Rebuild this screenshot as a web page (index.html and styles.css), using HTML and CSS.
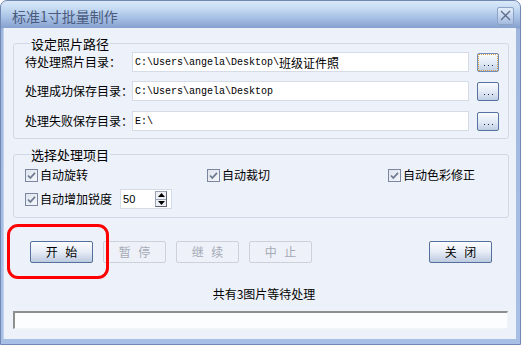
FILE: index.html
```html
<!DOCTYPE html>
<html lang="zh">
<head>
<meta charset="utf-8">
<title>标准1寸批量制作</title>
<link rel="stylesheet" href="styles.css">
</head>
<body>
<div class="window">
  <div class="titlebar">
    <span class="title">标准1寸批量制作</span>
    <span class="close-btn">
      <svg width="11" height="11" viewBox="0 0 11 11"><path d="M1 1 L10 10 M10 1 L1 10" stroke="#5d6b87" stroke-width="1.3" fill="none"/></svg>
    </span>
  </div>
  <div class="client">
    <fieldset class="group group-paths">
      <legend>设定照片路径</legend>
      <div class="path-row">
        <span class="label">待处理照片目录：</span>
        <div class="input"><span class="mono">C:\Users\angela\Desktop\</span><span class="cjk">班级证件照</span></div>
        <span class="browse focus"><i></i><i></i><i></i></span>
      </div>
      <div class="path-row">
        <span class="label">处理成功保存目录：</span>
        <div class="input"><span class="mono">C:\Users\angela\Desktop</span></div>
        <span class="browse"><i></i><i></i><i></i></span>
      </div>
      <div class="path-row">
        <span class="label">处理失败保存目录：</span>
        <div class="input"><span class="mono">E:\</span></div>
        <span class="browse"><i></i><i></i><i></i></span>
      </div>
    </fieldset>

    <fieldset class="group group-options">
      <legend>选择处理项目</legend>
      <div class="opt-row">
        <label class="check c1"><span class="box"><svg width="11" height="11" viewBox="0 0 11 11"><path d="M2 5.5 L4.3 8 L9 2.8" stroke="#6f7b92" stroke-width="1.8" fill="none"/></svg></span>自动旋转</label>
        <label class="check c2"><span class="box"><svg width="11" height="11" viewBox="0 0 11 11"><path d="M2 5.5 L4.3 8 L9 2.8" stroke="#6f7b92" stroke-width="1.8" fill="none"/></svg></span>自动裁切</label>
        <label class="check"><span class="box"><svg width="11" height="11" viewBox="0 0 11 11"><path d="M2 5.5 L4.3 8 L9 2.8" stroke="#6f7b92" stroke-width="1.8" fill="none"/></svg></span>自动色彩修正</label>
      </div>
      <div class="opt-row row2">
        <label class="check"><span class="box"><svg width="11" height="11" viewBox="0 0 11 11"><path d="M2 5.5 L4.3 8 L9 2.8" stroke="#6f7b92" stroke-width="1.8" fill="none"/></svg></span>自动增加锐度</label>
        <div class="spin">
          <span class="spin-val">50</span>
          <span class="spin-btns">
            <span class="spin-b"><svg width="7" height="4" viewBox="0 0 7 4"><path d="M0 4 L3.5 0 L7 4 Z" fill="#000"/></svg></span>
            <span class="spin-b"><svg width="7" height="4" viewBox="0 0 7 4"><path d="M0 0 L3.5 4 L7 0 Z" fill="#000"/></svg></span>
          </span>
        </div>
      </div>
    </fieldset>

    <div class="btn-row">
      <span class="btn">开 始</span>
      <span class="btn disabled">暂 停</span>
      <span class="btn disabled">继 续</span>
      <span class="btn disabled">中 止</span>
      <span class="spacer"></span>
      <span class="btn">关 闭</span>
      <span class="highlight"></span>
    </div>

    <div class="status">共有3图片等待处理</div>
    <div class="progress"></div>
  </div>
</div>
</body>
</html>
```
FILE: styles.css
```css
html, body {
  margin: 0;
  padding: 0;
  background: #ffffff;
}
body {
  font-family: "Noto Sans CJK SC", "Liberation Sans", sans-serif;
  font-size: 12px;
  color: #000;
}
.window {
  width: 521px;
  height: 345px;
  box-sizing: border-box;
  display: flex;
  flex-direction: column;
  border: 1px solid #7088b4;
  border-radius: 7px 7px 0 0;
  background: linear-gradient(to bottom, #dbe9f8 0px, #c4daf2 8px, #a9c2e6 16px, #86a1cf 27px, #9fb7df 28px, #a9c0e6 100%);
  overflow: hidden;
}
.titlebar {
  height: 27px;
  flex: none;
  display: flex;
  align-items: center;
  justify-content: space-between;
  padding: 0 6px 0 11px;
  box-sizing: border-box;
}
.title {
  font-size: 14px;
  color: #4a5b7d;
  line-height: 16px;
  margin-top: 2px;
}
.close-btn {
  width: 15px;
  height: 16px;
  border: 1px solid #8ea2c6;
  border-radius: 2px;
  background: linear-gradient(to bottom, rgba(255,255,255,0.45), rgba(255,255,255,0.15));
  display: flex;
  align-items: center;
  justify-content: center;
  margin-top: 2px;
}
.client {
  flex: 1;
  margin: 0 4px 5px 2px;
  background: #edf1f9;
  border-left: 1px solid #c3d2ec;
  display: flex;
  flex-direction: column;
  padding: 0 7px 0 9px;
  position: relative;
}
.group {
  margin: 0;
  border: 1px solid #d2d9e6;
  border-radius: 3px;
}
.group legend {
  font-size: 13px;
  line-height: 15px;
  padding: 0 1px;
  margin-left: 5px;
  color: #000;
}
.group-paths {
  margin-top: 8px;
  padding: 1px 8px 7px 11px;
  display: flex;
  flex-direction: column;
  gap: 9px;
}
.path-row {
  display: flex;
  align-items: center;
  height: 20px;
}
.path-row:nth-of-type(3) {
  margin-top: 1px;
}
.label {
  width: 107px;
  flex: none;
  white-space: nowrap;
  line-height: 20px;
}
.input {
  width: 337px;
  height: 20px;
  box-sizing: border-box;
  background: #fff;
  border: 1px solid #d5dce8;
  display: flex;
  align-items: center;
  padding-left: 2px;
  white-space: nowrap;
  overflow: hidden;
}
.mono {
  font-family: "Liberation Mono", "DejaVu Sans Mono", monospace;
  font-size: 10px;
  letter-spacing: 0;
}
.cjk {
  font-size: 12px;
}
.browse {
  margin-left: 8px;
  width: 22px;
  height: 19px;
  box-sizing: border-box;
  border: 1px solid #56729f;
  border-radius: 2px;
  background: linear-gradient(to bottom, #f9fbfe 0%, #e4ebf6 50%, #c1cfe5 100%);
  display: flex;
  align-items: flex-end;
  justify-content: center;
  gap: 3px;
  padding-bottom: 5px;
}
.browse.focus {
  outline: 1px dotted #d9a03a;
  outline-offset: -2px;
  border-color: #6f8cbf;
}
.browse i {
  width: 1px;
  height: 1px;
  background: #1c2a44;
}
.group-options {
  margin-top: 8px;
  padding: 5px 8px 8px 11px;
  display: flex;
  flex-direction: column;
  gap: 6px;
}
.opt-row {
  display: flex;
  align-items: center;
  height: 16px;
}
.opt-row.row2 {
  height: 20px;
}
.check {
  display: flex;
  align-items: center;
  white-space: nowrap;
  line-height: 16px;
}
.check.c1 { width: 182px; }
.check.c2 { width: 181px; }
.box {
  width: 13px;
  height: 13px;
  box-sizing: border-box;
  border: 1px solid #7d86a0;
  background: linear-gradient(to bottom right, #dfe4ee, #f4f6fa);
  display: flex;
  align-items: center;
  justify-content: center;
  margin-right: 2px;
}
.spin {
  margin-left: 8px;
  width: 52px;
  height: 20px;
  box-sizing: border-box;
  background: #fff;
  border: 1px solid #d5dce8;
  display: flex;
  align-items: center;
  justify-content: space-between;
  padding: 1px 4px 1px 2px;
}
.spin-val {
  font-family: "Liberation Sans", sans-serif;
  font-size: 11px;
}
.spin-btns {
  display: flex;
  flex-direction: column;
  width: 12px;
  height: 16px;
  border: 1px solid #9aa3b5;
  border-right-color: #5b6478;
  border-bottom-color: #5b6478;
  box-sizing: border-box;
  background: #eef0f4;
}
.spin-b {
  flex: 1;
  display: flex;
  align-items: center;
  justify-content: center;
}
.spin-b + .spin-b {
  border-top: 1px solid #9aa3b5;
}
.btn-row {
  display: flex;
  align-items: center;
  margin-top: 23px;
  padding-left: 17px;
  padding-right: 17px;
  gap: 10px;
  position: relative;
}
.btn {
  width: 63px;
  height: 22px;
  box-sizing: border-box;
  border: 1px solid #55709e;
  border-radius: 2px;
  background: linear-gradient(to bottom, #fbfcfe 0%, #e6ecf6 50%, #bccadf 100%);
  display: flex;
  align-items: center;
  justify-content: center;
  font-size: 12px;
  line-height: 14px;
  word-spacing: 5px;
}
.btn.disabled {
  border-color: #ccd1da;
  background: #eef1f8;
  color: #a5abb7;
}
.spacer {
  flex: 1;
}
.highlight {
  position: absolute;
  left: -6px;
  top: -17px;
  width: 102px;
  height: 55px;
  box-sizing: border-box;
  border: 3px solid #ff0000;
  border-radius: 11px;
}
.status {
  margin-top: 23px;
  text-align: center;
  line-height: 16px;
  padding-left: 6px;
}
.progress {
  margin-top: 9px;
  margin-right: 1px;
  height: 18px;
  box-sizing: border-box;
  background: #fcfdfe;
  border-top: 2px solid #8f8f8f;
  border-left: 2px solid #8f8f8f;
  border-right: 1px solid #f2f4f8;
  border-bottom: 1px solid #f2f4f8;
}
```
